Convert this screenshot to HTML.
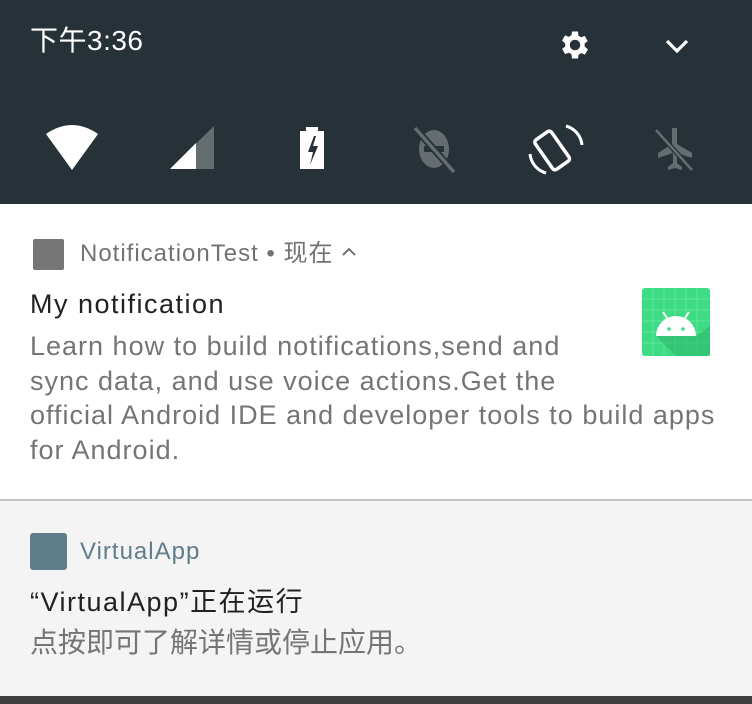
<!DOCTYPE html>
<html><head><meta charset="utf-8"><style>
*{margin:0;padding:0;box-sizing:border-box}
body{width:752px;height:704px;overflow:hidden;background:#f4f4f4;font-family:"Liberation Sans","Noto Sans CJK SC",sans-serif;position:relative}
.top{position:absolute;left:0;top:0;width:752px;height:204px;background:#263238}
.t{position:absolute;white-space:nowrap;line-height:1}
.n1{position:absolute;left:0;top:204px;width:752px;height:297px;background:#fff;border-bottom:2px solid #c4c4c4}
.bot{position:absolute;left:0;top:696px;width:752px;height:8px;background:#404040}
</style></head><body>
<div class="top"></div>
<div class="t" style="left:30px;top:27px;font-size:28px;color:#fff;letter-spacing:0.5px">下午3:36</div>
<svg style="position:absolute;left:557px;top:27px" width="36" height="36" viewBox="0 0 24 24"><path fill="#fff" d="M19.4 13a7.5 7.5 0 0 0 0-2l2.1-1.6-2-3.5-2.5 1a7 7 0 0 0-1.7-1L15 3h-4l-.4 2.6a7 7 0 0 0-1.7 1l-2.5-1-2 3.5L6.5 11a7.5 7.5 0 0 0 0 2l-2.1 1.6 2 3.5 2.5-1a7 7 0 0 0 1.7 1L11 21h4l.4-2.6a7 7 0 0 0 1.7-1l2.5 1 2-3.5zM13 15.5a3.5 3.5 0 1 1 0-7 3.5 3.5 0 0 1 0 7z" transform="translate(-1 0)"/></svg>
<svg style="position:absolute;left:664px;top:37px" width="26" height="18" viewBox="0 0 26 18"><path d="M3 4l10 10 10-10" stroke="#fff" stroke-width="3.2" fill="none"/></svg>
<svg style="position:absolute;left:44px;top:124px" width="56" height="46" viewBox="0 0 56 46"><path d="M2 10Q28-8 54 10L28 46z" fill="#fff"/></svg>
<svg style="position:absolute;left:170px;top:126px" width="44" height="44"><path d="M0 43L44 0V43z" fill="#656d71"/><path d="M0 43L26 17V43z" fill="#fff"/></svg>
<svg style="position:absolute;left:296px;top:125px" width="34" height="45"><rect x="10" y="2" width="12" height="5" fill="#fff"/><rect x="4" y="6" width="24" height="38" fill="#fff"/><path d="M18 11l-6 16h5l-3 13 8-19h-5l3-10z" fill="#263238"/></svg>
<svg style="position:absolute;left:410px;top:124px" width="50" height="50"><ellipse cx="24" cy="25" rx="15" ry="19" fill="#656d71"/><rect x="14" y="22" width="20" height="6" fill="#263238"/><path d="M5 4l39 44" stroke="#263238" stroke-width="7"/><path d="M5 4l39 44" stroke="#656d71" stroke-width="3.5"/></svg>
<svg style="position:absolute;left:528px;top:122px" width="56" height="54"><rect x="14" y="8" width="20" height="36" rx="3" transform="rotate(-35 28 27)" fill="none" stroke="#fff" stroke-width="3.5"/><path d="M38 4a22 22 0 0 1 16 19M18 51A22 22 0 0 1 2 32" stroke="#fff" stroke-width="3" fill="none"/></svg>
<svg style="position:absolute;left:652px;top:126px" width="46" height="46"><path d="M20 2h5v16l15 9v5l-15-5v10l5 4v3l-7-2-7 2v-3l5-4V27L6 32v-5l14-9z" fill="#656d71"/><path d="M4 4l36 40" stroke="#263238" stroke-width="5"/><path d="M4 4l36 40" stroke="#656d71" stroke-width="2.5"/></svg>

<div class="n1"></div>
<div style="position:absolute;left:33px;top:239px;width:31px;height:31px;background:#767676;border-radius:2px"></div>
<div class="t" style="left:80px;top:242px;font-size:24px;color:#727272;letter-spacing:1px">NotificationTest • 现在 <svg width="16" height="12" style="vertical-align:3px" viewBox="0 0 16 12"><path d="M2 9l6-6 6 6" stroke="#727272" stroke-width="2" fill="none"/></svg></div>
<div class="t" style="left:30px;top:291px;font-size:27px;color:#212121;letter-spacing:1.5px">My notification</div>
<div style="position:absolute;left:30px;top:329px;font-size:27px;line-height:34.5px;color:#757575;letter-spacing:1px;width:722px;white-space:nowrap">Learn how to build notifications,send and<br>sync data, and use voice actions.Get the<br>official Android IDE and developer tools to build apps<br>for Android.</div>
<svg style="position:absolute;left:642px;top:288px" width="68" height="68" viewBox="0 0 68 68"><rect width="68" height="68" rx="3" fill="#3ddc84"/><g stroke="#5fe39b" stroke-width="1"><path d="M0 11H68M0 22H68M0 33H68M0 44H68M0 55H68M11 0V68M22 0V68M33 0V68M44 0V68M55 0V68"/></g><path d="M14 48l20 20H68V38L54 48z" fill="#2fb86a" opacity=".6"/><path d="M14 48a20 20 0 0 1 40 0z" fill="#fff"/><path d="M21 24l4 6M47 24l-4 6" stroke="#fff" stroke-width="2"/><circle cx="27" cy="41" r="1.8" fill="#3ddc84"/><circle cx="41" cy="41" r="1.8" fill="#3ddc84"/></svg>

<div style="position:absolute;left:30px;top:533px;width:37px;height:37px;background:#607d8b;border-radius:3px"></div>
<div class="t" style="left:80px;top:540px;font-size:24px;color:#607d8b;letter-spacing:1px">VirtualApp</div>
<div class="t" style="left:30px;top:589px;font-size:27px;color:#212121;letter-spacing:1.5px">“VirtualApp”正在运行</div>
<div class="t" style="left:30px;top:629px;font-size:28px;color:#757575">点按即可了解详情或停止应用。</div>
<div class="bot"></div>
</body></html>
